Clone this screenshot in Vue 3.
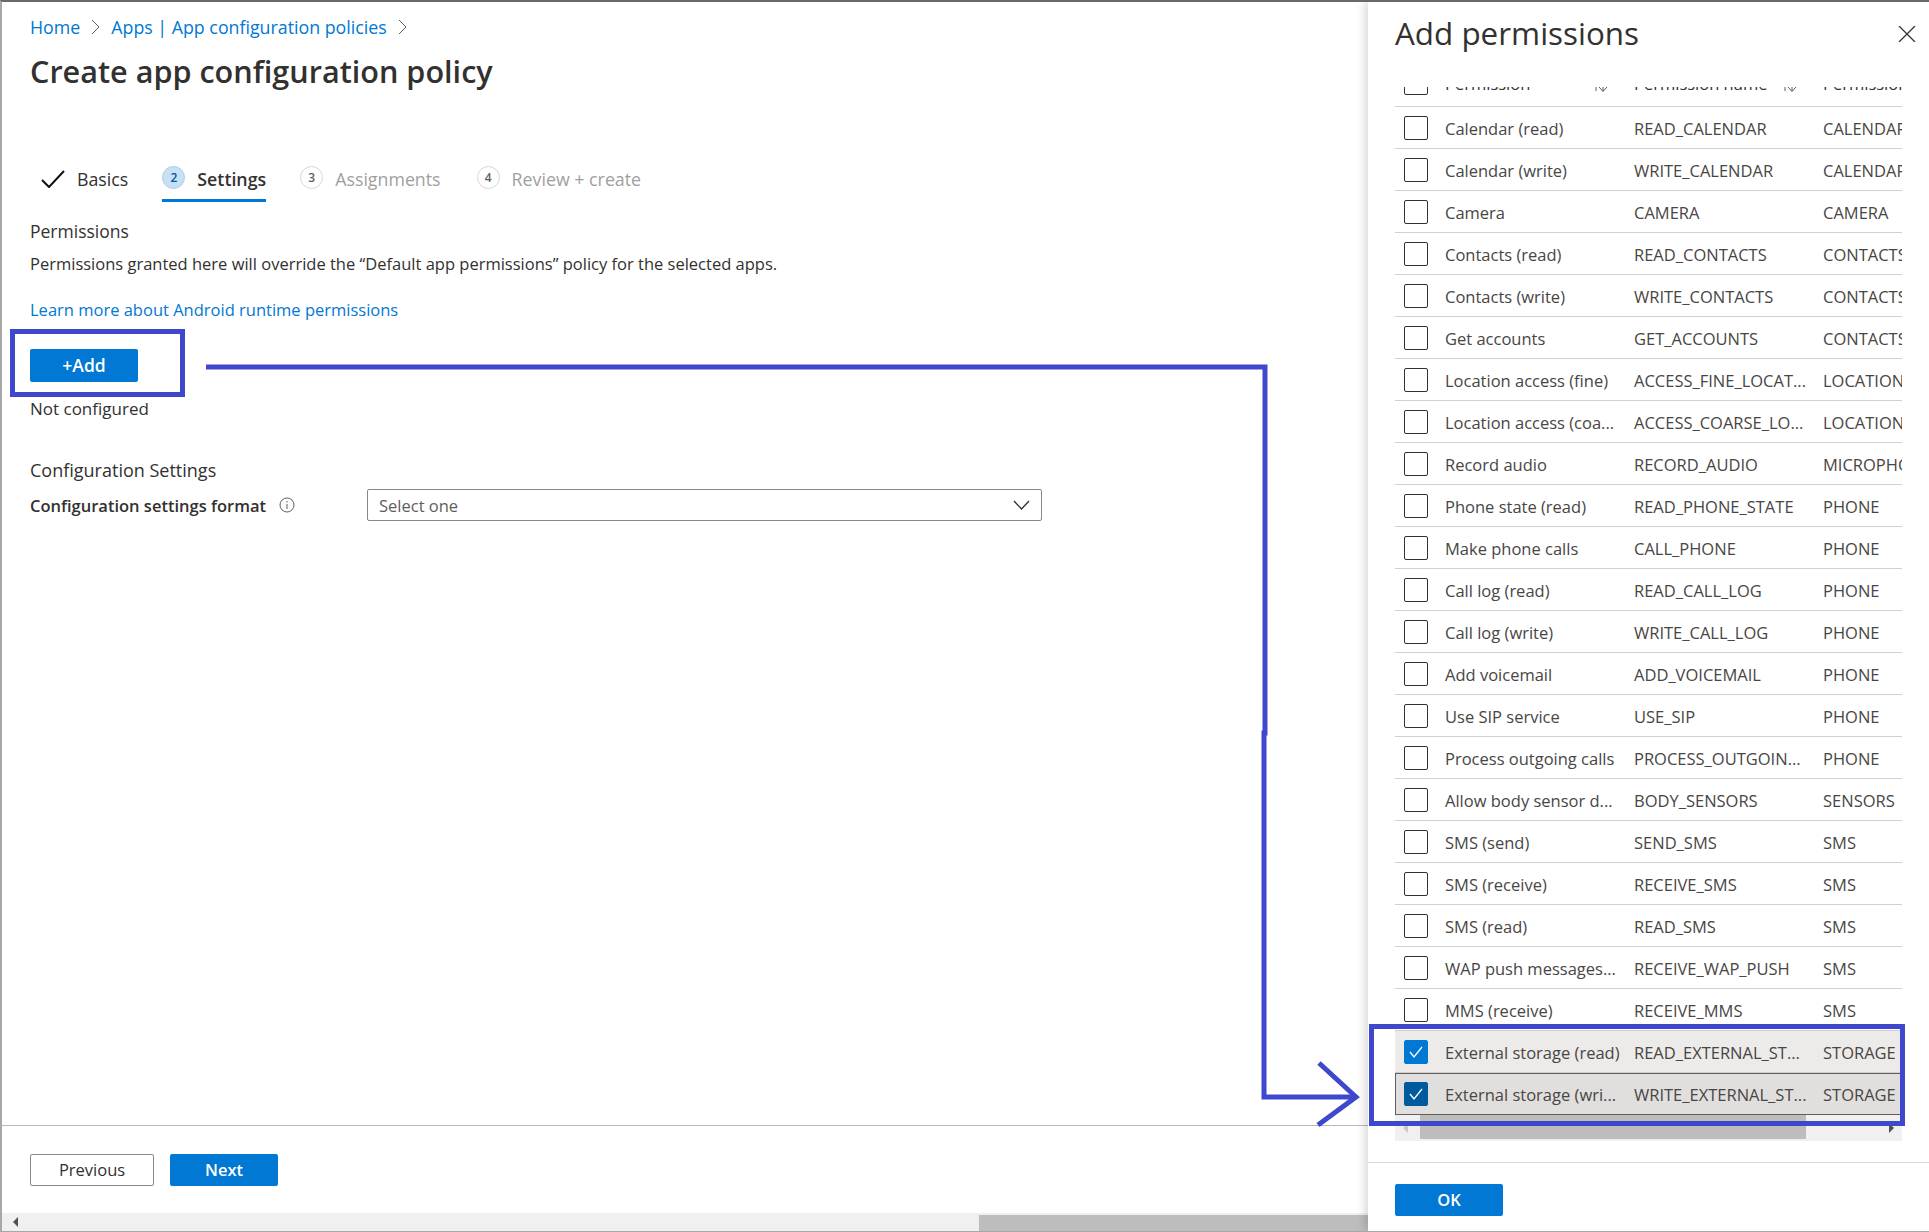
<template>
  <div class="page">
    <main class="main">
      <div class="content">
        <nav class="crumbs">
          <a>Home</a>
          <svg class="chev" width="9" height="16" viewBox="0 0 9 16"><path d="M1 1l7 7-7 7" /></svg>
          <a>Apps | App configuration policies</a>
          <svg class="chev" width="9" height="16" viewBox="0 0 9 16"><path d="M1 1l7 7-7 7" /></svg>
        </nav>
        <h1 class="title">Create app configuration policy</h1>

        <div class="tabs">
          <div class="tab done">
            <svg width="24" height="18" viewBox="0 0 24 18"><path d="M1 10l7 7L23 1" /></svg>
            <span>Basics</span>
          </div>
          <div v-for="t in steps" :key="t.n" class="tab" :class="{ active: t.active }">
            <span class="num">{{ t.n }}</span>
            <span>{{ t.label }}</span>
          </div>
        </div>

        <div class="heading">Permissions</div>
        <p class="desc">Permissions granted here will override the “Default app permissions” policy for the selected apps.</p>
        <a class="learn">Learn more about Android runtime permissions</a>
        <button class="btn primary add">+Add</button>
        <div class="none">Not configured</div>

        <div class="heading cfg">Configuration Settings</div>
        <div class="format">
          <label>Configuration settings format</label>
          <svg class="info" width="16" height="16" viewBox="0 0 16 16">
            <circle cx="8" cy="8" r="7" />
            <path d="M8 7v5M8 4v1.500" />
          </svg>
          <div class="select">
            <span>Select one</span>
            <svg width="17" height="10" viewBox="0 0 17 10"><path d="M1 1l7.500 8L16 1" /></svg>
          </div>
        </div>
      </div>

      <footer class="foot">
        <button class="btn ghost">Previous</button>
        <button class="btn primary next">Next</button>
      </footer>
      <div class="page-scroll">
        <span class="arrow-l"></span>
        <span class="page-thumb"></span>
      </div>
    </main>

    <aside class="panel">
      <div class="panel-head">
        <h2>Add permissions</h2>
        <svg width="18" height="16" viewBox="0 0 18 16"><path d="M1 0l16 16M17 0L1 16" /></svg>
      </div>

      <div class="table-wrap">
        <div class="table">
          <div class="row header">
            <span class="box"></span>
            <span class="cell">Permission
              <svg class="sort" width="16" height="14" viewBox="0 0 16 14"><path d="M4 12V2M2 4l2-2 2 2M11 2v10M7 8l4 4.500L15 8" /></svg>
            </span>
            <span class="cell">Permission name
              <svg class="sort" width="16" height="14" viewBox="0 0 16 14"><path d="M4 12V2M2 4l2-2 2 2M11 2v10M7 8l4 4.500L15 8" /></svg>
            </span>
            <span class="cell">Permission group</span>
          </div>
          <div v-for="r in rows" :key="r[1]" class="row" :class="r[3]">
            <span class="box" :class="{ checked: r[3] }">
              <svg v-if="r[3]" width="16" height="14" viewBox="0 0 16 14"><path d="M2 7l4 5 8-10" /></svg>
            </span>
            <span class="cell">{{ r[0] }}</span>
            <span class="cell">{{ r[1] }}</span>
            <span class="cell">{{ r[2] }}</span>
          </div>
        </div>
        <div class="table-scroll">
          <span class="tri left"></span>
          <span class="table-thumb"></span>
          <span class="tri right"></span>
        </div>
      </div>

      <div class="panel-foot">
        <button class="btn primary ok">OK</button>
      </div>
    </aside>

    <!-- hand drawn annotation on top of the screenshot -->
    <svg class="marks" width="1929" height="1232" viewBox="0 0 1929 1232">
      <rect x="12.500" y="331.500" width="170" height="63" />
      <rect x="1371.500" y="1026.500" width="531" height="97" />
      <path d="M206 367H1265V733H1264V1097H1355" />
      <path d="M1319 1063L1356 1097L1318 1125" />
    </svg>
  </div>
</template>

<script setup>
const steps = [
  { n: 2, label: 'Settings', active: true },
  { n: 3, label: 'Assignments' },
  { n: 4, label: 'Review + create' },
]

const rows = [
  ['Calendar (read)', 'READ_CALENDAR', 'CALENDAR'],
  ['Calendar (write)', 'WRITE_CALENDAR', 'CALENDAR'],
  ['Camera', 'CAMERA', 'CAMERA'],
  ['Contacts (read)', 'READ_CONTACTS', 'CONTACTS'],
  ['Contacts (write)', 'WRITE_CONTACTS', 'CONTACTS'],
  ['Get accounts', 'GET_ACCOUNTS', 'CONTACTS'],
  ['Location access (fine)', 'ACCESS_FINE_LOCAT...', 'LOCATION'],
  ['Location access (coa...', 'ACCESS_COARSE_LO...', 'LOCATION'],
  ['Record audio', 'RECORD_AUDIO', 'MICROPHONE'],
  ['Phone state (read)', 'READ_PHONE_STATE', 'PHONE'],
  ['Make phone calls', 'CALL_PHONE', 'PHONE'],
  ['Call log (read)', 'READ_CALL_LOG', 'PHONE'],
  ['Call log (write)', 'WRITE_CALL_LOG', 'PHONE'],
  ['Add voicemail', 'ADD_VOICEMAIL', 'PHONE'],
  ['Use SIP service', 'USE_SIP', 'PHONE'],
  ['Process outgoing calls', 'PROCESS_OUTGOIN...', 'PHONE'],
  ['Allow body sensor d...', 'BODY_SENSORS', 'SENSORS'],
  ['SMS (send)', 'SEND_SMS', 'SMS'],
  ['SMS (receive)', 'RECEIVE_SMS', 'SMS'],
  ['SMS (read)', 'READ_SMS', 'SMS'],
  ['WAP push messages...', 'RECEIVE_WAP_PUSH', 'SMS'],
  ['MMS (receive)', 'RECEIVE_MMS', 'SMS'],
  ['External storage (read)', 'READ_EXTERNAL_ST...', 'STORAGE', 'selected'],
  ['External storage (wri...', 'WRITE_EXTERNAL_ST...', 'STORAGE', 'focused'],
]
</script>

<style>
html, body { margin: 0; background: #fff; }
</style>

<style scoped>
.page {
  position: relative;
  display: flex;
  width: 1929px;
  height: 1232px;
  box-sizing: border-box;
  border-top: 2px solid #6a6a6a;
  border-bottom: 1px solid #a8a8a8;
  border-left: 2px solid #a8a8a8;
  overflow: hidden;
  font-family: "Open Sans", sans-serif;
  font-size: 16.500px;
  color: #323130;
  background: #fff;
}
.main {
  flex: 1;
  min-width: 0;
  display: flex;
  flex-direction: column;
}
.content {
  flex: 1;
  padding: 13px 0 0 28px;
}
.crumbs {
  display: flex;
  align-items: center;
  height: 24px;
  color: #0078d4;
  font-size: 17.800px;
}
.chev {
  margin: 0 11px;
  fill: none;
  stroke: #605e5c;
}
.title {
  margin: 12px 0 0;
  font-size: 30.600px;
  line-height: 40px;
  font-weight: 600;
}
.tabs {
  display: flex;
  gap: 34px;
  margin-top: 75px;
  height: 36px;
}
.tab {
  display: flex;
  align-items: center;
  gap: 12px;
  box-sizing: border-box;
  height: 36px;
  padding-bottom: 8px;
  color: #a19f9d;
  font-size: 17.800px;
  border-bottom: 3px solid transparent;
}
.tab:last-child { margin-left: 2px; }
.tab.done {
  color: #323130;
  margin-left: 11px;
}
.tab.done svg {
  fill: none;
  stroke: #111;
  stroke-width: 2;
}
.tab.active {
  color: #323130;
  font-weight: 600;
  border-bottom-color: #0078d4;
}
.num {
  box-sizing: border-box;
  width: 23px;
  height: 23px;
  border: 1px solid #d6d6d6;
  border-radius: 50%;
  font-size: 12px;
  font-weight: 600;
  line-height: 21px;
  text-align: center;
  color: #605e5c;
  margin-bottom: 3px;
}
.active .num {
  background: #c7e0f4;
  border-color: #a9d0ee;
  color: #005a9e;
}
.heading {
  margin-top: 18px;
  line-height: 22px;
  font-size: 17.500px;
}
.desc {
  margin: 11px 0 0;
  line-height: 22px;
}
.learn {
  display: block;
  margin-top: 24px;
  line-height: 22px;
  color: #0078d4;
}
.btn {
  display: block;
  box-sizing: border-box;
  height: 32px;
  padding: 0 0 2px;
  border-radius: 2px;
  font-family: inherit;
  font-size: 16.500px;
  font-weight: 600;
}
.primary {
  border: 0;
  background: #0078d4;
  color: #fff;
}
.ghost {
  width: 124px;
  border: 1px solid #8a8886;
  background: #fff;
  color: #323130;
  font-weight: 400;
}
.add { width: 108px; height: 33px; margin-top: 28px; font-size: 17.500px; }
.next { width: 108px; }
.none {
  margin-top: 16px;
  line-height: 22px;
  font-size: 17px;
}
.cfg { margin-top: 39px; font-size: 18px; }
.format {
  display: flex;
  align-items: center;
  margin-top: 8px;
  height: 32px;
}
.format label { width: 249px; font-weight: 600; white-space: nowrap; }
.info {
  fill: none;
  stroke: #605e5c;
  stroke-width: 1;
  margin-right: 72px;
}
.select {
  display: flex;
  align-items: center;
  justify-content: space-between;
  box-sizing: border-box;
  width: 675px;
  height: 32px;
  padding: 0 11px;
  border: 1px solid #8a8886;
  border-radius: 2px;
  color: #605e5c;
}
.select svg { fill: none; stroke: #323130; stroke-width: 1.300; }
.foot {
  display: flex;
  gap: 16px;
  box-sizing: border-box;
  height: 88px;
  padding: 28px 0 0 28px;
  border-top: 1px solid #b8b8b8;
}
.page-scroll {
  position: relative;
  height: 18px;
  background: #f0f0f0;
}
.arrow-l {
  position: absolute;
  left: 11px;
  top: 4px;
  border: 5px solid transparent;
  border-left-width: 0;
  border-right-color: #505050;
}
.page-thumb {
  position: absolute;
  left: 977px;
  right: 0;
  top: 2px;
  bottom: 0;
  background: #bdbdbd;
}
.panel {
  position: relative;
  z-index: 1;
  display: flex;
  flex-direction: column;
  width: 561px;
  box-sizing: border-box;
  padding: 0 27px;
  background: #fff;
  box-shadow: -3px 0 9px rgba(0, 0, 0, 0.16);
}
.panel-head {
  display: flex;
  align-items: center;
  justify-content: space-between;
  height: 40px;
  margin-top: 10px;
}
.panel-head h2 {
  margin: 0;
  font-size: 31.400px;
  font-weight: 400;
}
.panel-head svg {
  fill: none;
  stroke: #323130;
  stroke-width: 1.300;
  margin-right: -14px;
  margin-top: 4px;
}
.table-wrap {
  width: 507px;
  margin-top: 35px;
  overflow: hidden;
}
.table { margin-top: -22px; }
.row {
  display: grid;
  grid-template-columns: 50px 189px 189px 120px;
  align-items: center;
  box-sizing: border-box;
  height: 42px;
  border-bottom: 1px solid #d2d0ce;
  white-space: nowrap;
}
.row.header { padding-bottom: 6px; }
.row.selected { background: #edebe9; }
.row.focused {
  background: #e1dfdd;
  outline: 1px solid #605e5c;
  outline-offset: -1px;
}
.box {
  display: flex;
  align-items: center;
  justify-content: center;
  box-sizing: border-box;
  width: 24px;
  height: 24px;
  margin-left: 9px;
  border: 1px solid #323130;
  border-radius: 2px;
  background: #fff;
}
.box svg { fill: none; stroke: #fff; stroke-width: 1.300; }
.box.checked { background: #0078d4; border-color: #0078d4; }
.focused .box.checked { background: #005a9e; border-color: #005a9e; }
.cell { color: #484644; padding-top: 1px; }
.header .cell {
  position: relative;
  color: #323130;
}
.sort {
  position: absolute;
  right: 26px;
  top: 8px;
  fill: none;
  stroke: #605e5c;
}
.table-scroll {
  position: relative;
  height: 26px;
  background: #f0f0f0;
}
.table-thumb {
  position: absolute;
  left: 25px;
  width: 386px;
  top: 0;
  bottom: 2px;
  background: #bdbdbd;
}
.tri {
  position: absolute;
  top: 8px;
  border: 5px solid transparent;
}
.tri.left { left: 8px; border-left-width: 0; border-right-color: #c8c8c8; }
.tri.right { right: 8px; border-right-width: 0; border-left-color: #505050; }
.panel-foot {
  margin: 21px -27px 0;
  padding: 21px 27px 0;
  border-top: 1px solid #d9d9d9;
}
.ok { width: 108px; }
.marks {
  position: absolute;
  left: -2px;
  top: -2px;
  z-index: 2;
  fill: none;
  stroke: #3f48cc;
  stroke-width: 5;
  pointer-events: none;
}
</style>
